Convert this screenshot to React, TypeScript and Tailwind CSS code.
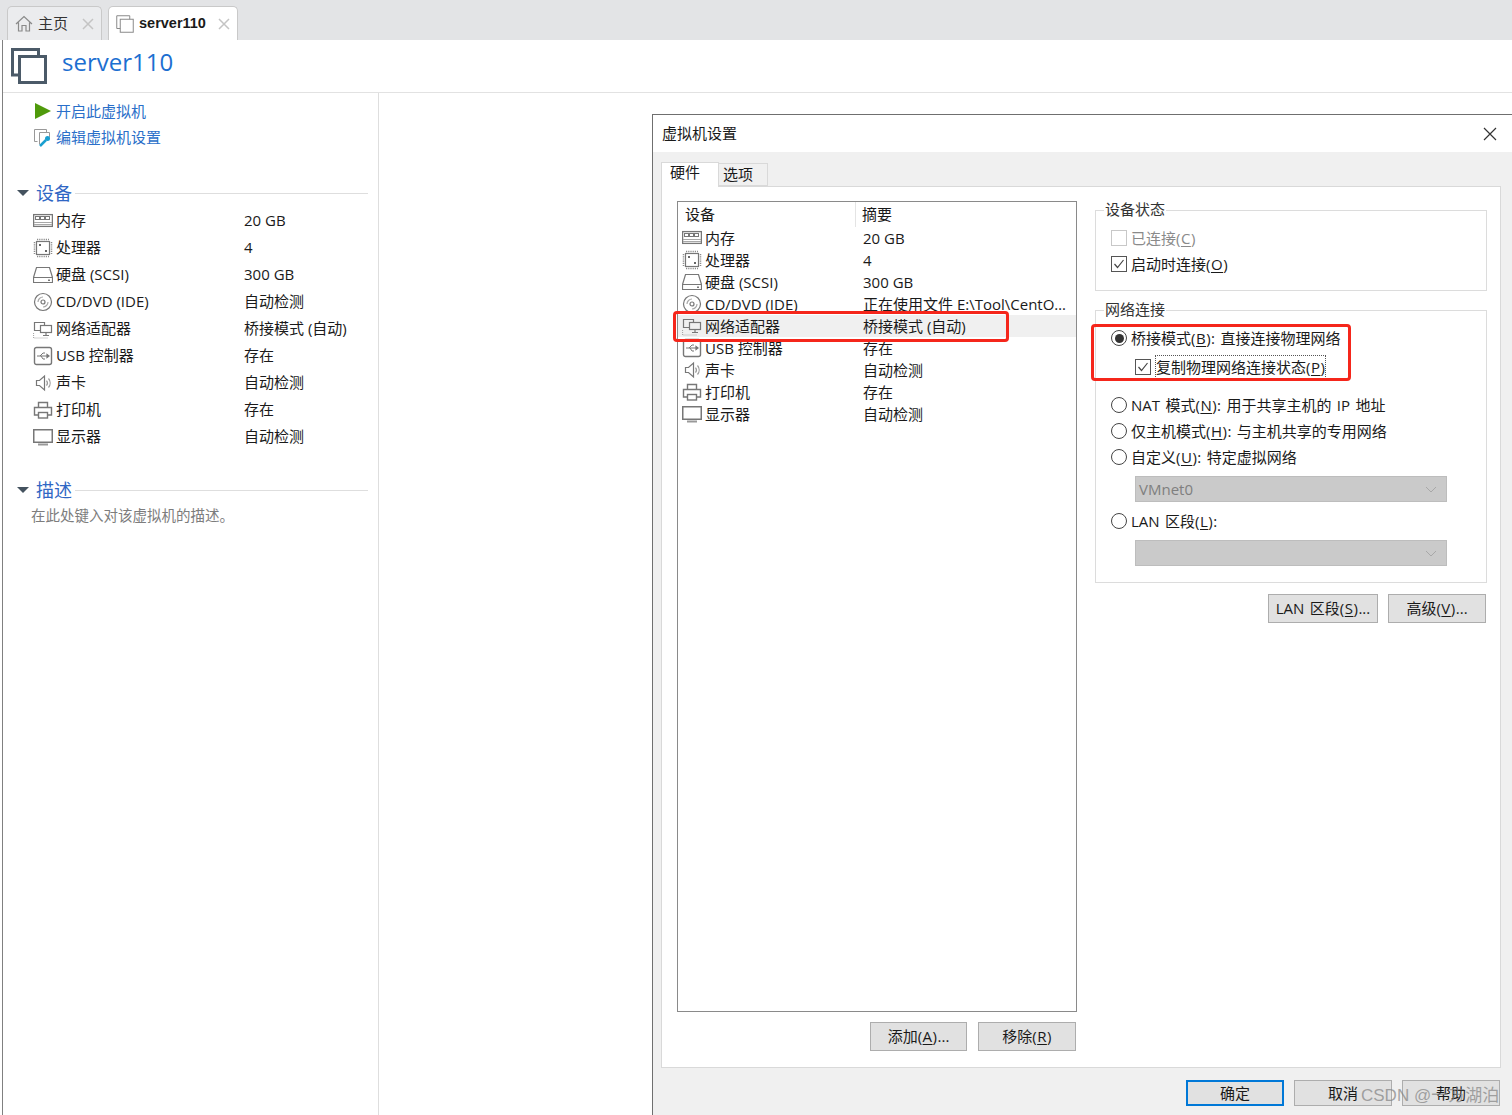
import React from 'react';

const FONT = "font-['Open_Sans','Noto_Sans_CJK_SC',sans-serif]";

const stroke = { fill: 'none', stroke: '#777', strokeWidth: 1.2 };

const MemoryIcon = () => (
  <svg width="20" height="20" viewBox="0 0 20 20" {...stroke}>
    <rect x="0.6" y="3.6" width="18.8" height="11.8" strokeWidth="1.3" />
    <rect x="2.5" y="5.5" width="4" height="3" strokeWidth="1" />
    <rect x="7.5" y="5.5" width="4" height="3" strokeWidth="1" />
    <rect x="12.5" y="5.5" width="4" height="3" strokeWidth="1" />
    <path d="M1 11.5h18M1 13.5h18" stroke="#a8a8a8" strokeWidth="1" />
  </svg>
);

const CpuIcon = () => (
  <svg width="20" height="20" viewBox="0 0 20 20" {...stroke}>
    <rect x="3.5" y="3.5" width="13" height="13" />
    <path d="M4 1.5h12M4 18.5h12M1.5 4v12M18.5 4v12" strokeDasharray="1.2 1" strokeWidth="1.5" stroke="#8c8c8c" />
    <rect x="6" y="6" width="2" height="2" fill="#666" stroke="none" />
    <rect x="12" y="12" width="2" height="2" fill="#666" stroke="none" />
  </svg>
);

const DiskIcon = () => (
  <svg width="20" height="20" viewBox="0 0 20 20" {...stroke}>
    <path d="M3.5 2.5h13l3 10v5h-19v-5zM0.5 12.5h19" />
    <rect x="15" y="14.5" width="2" height="1.5" fill="#777" stroke="none" />
  </svg>
);

const CdIcon = () => (
  <svg width="20" height="20" viewBox="0 0 20 20" {...stroke}>
    <circle cx="10" cy="10" r="8.5" />
    <circle cx="10" cy="10" r="2" />
    <path d="M5 10a5 5 0 0 1 5-5M15 10a5 5 0 0 1-5 5" stroke="#a8a8a8" />
  </svg>
);

const NetworkIcon = () => (
  <svg width="20" height="20" viewBox="0 0 20 20" {...stroke}>
    <path d="M7 11.5H1.5v-8h10v3" />
    <rect x="7.5" y="6.5" width="11" height="7" />
    <path d="M13 13.5v3M10 16.5h6" />
    <path d="M0.5 14v5h14" stroke="#a8a8a8" strokeDasharray="1 1" />
  </svg>
);

const UsbIcon = () => (
  <svg width="20" height="20" viewBox="0 0 20 20" {...stroke}>
    <rect x="1.5" y="1.5" width="17" height="17" rx="2" strokeWidth="1.4" />
    <path d="M4 10h12M7 10l3-3h2M8 10l2 3h2" strokeWidth="1" />
    <path d="M16 10l-2-1.5v3z" fill="#777" />
  </svg>
);

const SoundIcon = () => (
  <svg width="20" height="20" viewBox="0 0 20 20" {...stroke}>
    <path d="M3.5 7.5h3l5-4.5v14l-5-4.5h-3z" />
    <path d="M13.5 7.5a4 4 0 0 1 0 5M15.5 5.5a7 7 0 0 1 0 9" stroke="#999" />
  </svg>
);

const PrinterIcon = () => (
  <svg width="20" height="20" viewBox="0 0 20 20" {...stroke} strokeWidth="1.4">
    <path d="M5.5 7V2.5h9V7" />
    <path d="M5 15H1.5V7.5h17V15H15" />
    <rect x="5.5" y="12.5" width="9" height="5.5" />
  </svg>
);

const MonitorIcon = () => (
  <svg width="20" height="20" viewBox="0 0 20 20" {...stroke}>
    <rect x="0.75" y="2.75" width="18.5" height="12.5" strokeWidth="1.5" />
    <path d="M5 17.5h10" strokeWidth="2" stroke="#999" />
  </svg>
);

const VmIcon = ({ size, sw, color }: { size: number; sw: number; color: string }) => (
  <svg width={size} height={size} viewBox="0 0 36 36" fill="none" stroke={color} strokeWidth={sw}>
    <path d="M8.5 27H1.5V1.5h26v7" />
    <rect x="8.5" y="8.5" width="26" height="26" />
  </svg>
);

const devices = [
  { icon: MemoryIcon, name: '内存', value: '20 GB', summary: '20 GB' },
  { icon: CpuIcon, name: '处理器', value: '4', summary: '4' },
  { icon: DiskIcon, name: '硬盘 (SCSI)', value: '300 GB', summary: '300 GB' },
  { icon: CdIcon, name: 'CD/DVD (IDE)', value: '自动检测', summary: '正在使用文件 E:\\Tool\\CentO…' },
  { icon: NetworkIcon, name: '网络适配器', value: '桥接模式 (自动)', summary: '桥接模式 (自动)' },
  { icon: UsbIcon, name: 'USB 控制器', value: '存在', summary: '存在' },
  { icon: SoundIcon, name: '声卡', value: '自动检测', summary: '自动检测' },
  { icon: PrinterIcon, name: '打印机', value: '存在', summary: '存在' },
  { icon: MonitorIcon, name: '显示器', value: '自动检测', summary: '自动检测' },
];

const Caret = () => <span className="h-0 w-0 border-x-[6px] border-t-[6px] border-x-transparent border-t-[#44525f]" />;

const SectionHead = ({ title }: { title: string }) => (
  <div className="flex h-6 items-center pl-[14px] pr-[10px]">
    <Caret />
    <span className="ml-[7px] text-[18px] leading-6 text-[#2f66c4]">{title}</span>
    <span className="ml-[3px] h-px flex-1 bg-[#dedede]" />
  </div>
);

const Sidebar = () => (
  <aside className="flex w-[376px] shrink-0 flex-col border-r border-[#dedede] pt-[5px]">
    <div className="flex h-[26px] items-center pl-[29px] text-[15px] text-[#2a6fc9]">
      <svg width="20" height="20" viewBox="0 0 20 20" className="mr-[4px]">
        <path d="M3 2l16 8-16 8z" fill="#4f9a0b" />
      </svg>
      开启此虚拟机
    </div>
    <div className="flex h-[26px] items-center pl-[29px] text-[15px] text-[#2a6fc9]">
      <svg width="20" height="20" viewBox="0 0 20 20" className="mr-[4px]">
        <path d="M5.5 14.5H2.5V2.5h12v3" fill="none" stroke="#999" />
        <path d="M7.5 17.5V5.5h10v5" fill="none" stroke="#999" />
        <path d="M8 19l6-6" stroke="#1a9fd0" strokeWidth="2.5" />
        <circle cx="15.5" cy="11.5" r="2.5" fill="#1a9fd0" />
      </svg>
      编辑虚拟机设置
    </div>
    <div className="mt-[31px]">
      <SectionHead title="设备" />
    </div>
    <div className="mt-[2px] flex flex-col">
      {devices.map((d) => (
        <div key={d.name} className="flex h-[27px] items-center pl-[29px] text-[15px] text-[#1a1a1a]">
          <span className="mr-[2px] flex w-[22px] justify-center"><d.icon /></span>
          <span className="w-[188px]">{d.name}</span>
          <span>{d.value}</span>
        </div>
      ))}
    </div>
    <div className="mt-[28px]">
      <SectionHead title="描述" />
    </div>
    <p className="mt-[2px] pl-[28px] text-[14.5px] leading-6 text-[#7d7d7d]">在此处键入对该虚拟机的描述。</p>
  </aside>
);

const Underlined = ({ before, k, after }: { before: string; k: string; after?: string }) => (
  <span className="whitespace-pre [word-spacing:1.5px]">
    {before}
    <span className="tracking-[0.5px]">(<span className="underline underline-offset-2">{k}</span>)</span>
    {after}
  </span>
);

const Check = ({ disabled }: { disabled?: boolean }) => (
  <span className={`flex h-4 w-4 shrink-0 items-center justify-center border ${disabled ? 'border-[#c8c8c8]' : 'border-[#555]'} bg-white`}>
    {!disabled && (
      <svg width="12" height="12" viewBox="0 0 12 12">
        <path d="M1.5 6l3 3.5 6-7.5" fill="none" stroke="#444" strokeWidth="1.2" />
      </svg>
    )}
  </span>
);

const Radio = ({ on }: { on?: boolean }) => (
  <span className="flex h-4 w-4 shrink-0 items-center justify-center rounded-full border border-[#444] bg-white">
    {on && <span className="h-[9px] w-[9px] rounded-full bg-[#333]" />}
  </span>
);

const Row = ({ className, children }: { className: string; children: React.ReactNode }) => (
  <div className={`flex items-center gap-[4px] text-[15px] ${className}`}>{children}</div>
);

const DisabledSelect = ({ value, className }: { value?: string; className: string }) => (
  <div className={`ml-[24px] flex h-[26px] w-[312px] items-center justify-between border border-[#bdbdbd] bg-[#cacaca] pl-[3px] pr-[9px] text-[15px] text-[#7f7f7f] ${className}`}>
    <span>{value}</span>
    <svg width="12" height="7" viewBox="0 0 12 7">
      <path d="M1 1l5 5 5-5" fill="none" stroke="#a8a8a8" />
    </svg>
  </div>
);

const Btn = ({ className, children }: { className: string; children: React.ReactNode }) => (
  <div className={`flex items-center justify-center border bg-[#e1e1e1] text-[15px] text-[#1a1a1a] ${className}`}>{children}</div>
);

const Group = ({ title, className, children }: { title: string; className: string; children: React.ReactNode }) => (
  <div className={`border border-[#dcdcdc] ${className}`}>
    <span className="ml-[8px] -mt-[13px] block h-[24px] w-fit bg-white px-[1px] text-[15px] leading-[22px] text-[#333]">{title}</span>
    <div className="pl-[15px]">{children}</div>
  </div>
);

const Dialog = () => (
  <div className="ml-[273px] mt-[21px] flex h-[1001px] w-[860px] flex-col border-l border-t border-[#6f6f6f] bg-[#f0f0f0]">
    <div className="flex h-[37px] shrink-0 items-center justify-between bg-white pl-[9px] pr-[15px] text-[15px] text-[#1a1a1a]">
      虚拟机设置
      <svg width="14" height="14" viewBox="0 0 14 14">
        <path d="M1 1l12 12M13 1L1 13" stroke="#333" strokeWidth="1.2" />
      </svg>
    </div>
    <div className="flex flex-1 flex-col pl-[8px] pr-[11px] pt-[9px]">
      <div className="flex h-[25px] items-end">
        <div className="z-10 -mb-px h-[25px] w-[58px] border border-b-0 border-[#d9d9d9] bg-white pl-[8px] text-[15px] leading-[18px] text-[#1a1a1a]">硬件</div>
        <div className="h-[23px] w-[49px] border border-l-0 border-[#d9d9d9] bg-[#f0f0f0] pl-[4px] text-[15px] leading-[21px] text-[#1a1a1a]">选项</div>
      </div>
      <div className="flex h-[882px] border border-[#d9d9d9] bg-white pl-[15px] pr-[13px] pt-[14px]">
        <div className="flex w-[400px] shrink-0 flex-col">
          <div className="flex h-[811px] flex-col border border-[#8a8a8a] bg-white">
            <div className="flex h-[25px] items-center text-[15px] text-[#1a1a1a]">
              <span className="h-full w-[178px] border-r border-[#e4e4e4] pl-[7px] leading-[25px]">设备</span>
              <span className="pl-[6px]">摘要</span>
            </div>
            {devices.map((d) => (
              <div key={d.name} className={`flex h-[22px] items-center text-[15px] text-[#1a1a1a] ${d.name === '网络适配器' ? 'bg-[#f0f0f0]' : ''}`}>
                <span className="ml-[4px] mr-[3px] flex w-[20px] justify-center"><d.icon /></span>
                <span className="w-[158px]">{d.name}</span>
                <span className="whitespace-nowrap">{d.summary}</span>
              </div>
            ))}
          </div>
          <div className="mt-[10px] flex justify-end gap-[11px] pr-px">
            <Btn className="h-[29px] w-[97px] border-[#adadad]"><Underlined before="添加" k="A" after="..." /></Btn>
            <Btn className="h-[29px] w-[98px] border-[#adadad]"><Underlined before="移除" k="R" /></Btn>
          </div>
        </div>
        <div className="ml-[18px] flex flex-1 flex-col pt-[9px]">
          <Group title="设备状态" className="h-[81px]">
            <Row className="mt-[3px] h-[26px] text-[#8a8a8a]"><Check disabled /><Underlined before="已连接" k="C" /></Row>
            <Row className="h-[26px] text-[#1a1a1a]"><Check /><Underlined before="启动时连接" k="O" /></Row>
          </Group>
          <Group title="网络连接" className="mt-[19px] h-[273px] text-[#1a1a1a]">
            <Row className="mt-[4px] h-[24px]"><Radio on /><Underlined before="桥接模式" k="B" after=": 直接连接物理网络" /></Row>
            <Row className="ml-[24px] mt-[5px] h-[24px]"><Check /><span className="border border-dotted border-[#555]"><Underlined before="复制物理网络连接状态" k="P" /></span></Row>
            <Row className="mt-[14px] h-[24px]"><Radio /><Underlined before="NAT 模式" k="N" after=": 用于共享主机的 IP 地址" /></Row>
            <Row className="mt-[2px] h-[24px]"><Radio /><Underlined before="仅主机模式" k="H" after=": 与主机共享的专用网络" /></Row>
            <Row className="mt-[2px] h-[24px]"><Radio /><Underlined before="自定义" k="U" after=": 特定虚拟网络" /></Row>
            <DisabledSelect value="VMnet0" className="mt-[7px]" />
            <Row className="mt-[7px] h-[24px]"><Radio /><Underlined before="LAN 区段" k="L" after=":" /></Row>
            <DisabledSelect className="mt-[7px]" />
          </Group>
          <div className="mt-[11px] flex justify-end gap-[10px] pr-px">
            <Btn className="h-[29px] w-[110px] border-[#adadad]"><Underlined before="LAN 区段" k="S" after="..." /></Btn>
            <Btn className="h-[29px] w-[98px] border-[#adadad]"><Underlined before="高级" k="V" after="..." /></Btn>
          </div>
        </div>
      </div>
      <div className="mt-[12px] flex justify-end gap-[10px] pr-px">
        <Btn className="h-[26px] w-[98px] border-2 border-[#0078d7]">确定</Btn>
        <Btn className="h-[26px] w-[98px] border-[#adadad]">取消</Btn>
        <Btn className="h-[26px] w-[98px] border-[#adadad]">帮助</Btn>
      </div>
    </div>
  </div>
);

export default function App() {
  return (
    <div className={`relative flex h-[1115px] w-[1512px] flex-col overflow-hidden bg-white ${FONT}`}>
      <div className="flex h-10 shrink-0 items-end gap-[6px] bg-[#e3e4e6] pl-[7px]">
        <div className="flex h-[34px] w-[95px] items-center rounded-t-[5px] border border-b-0 border-[#c9c9c9] bg-[#ebecee] pl-[7px] text-[15px] text-[#333]">
          <svg width="18" height="18" viewBox="0 0 18 18" fill="none" stroke="#8a8a8a" strokeWidth="1.2">
            <path d="M1 9l8-7.5L17 9M3.5 7.5v8.5h3.5v-5.5h4V16h3.5V7.5" />
          </svg>
          <span className="ml-[5px]">主页</span>
          <svg width="12" height="12" viewBox="0 0 12 12" className="ml-[14px]">
            <path d="M1 1l10 10M11 1L1 11" stroke="#c4c4c4" strokeWidth="1.5" />
          </svg>
        </div>
        <div className="flex h-[34px] w-[130px] items-center rounded-t-[5px] border border-b-0 border-[#c9c9c9] bg-white pl-[7px] text-[14.5px] font-bold text-[#1a1a1a]">
          <VmIcon size={18} sw={2} color="#8a8a8a" />
          <span className="ml-[5px] font-['Liberation_Sans',sans-serif]">server110</span>
          <svg width="12" height="12" viewBox="0 0 12 12" className="ml-[12px]">
            <path d="M1 1l10 10M11 1L1 11" stroke="#c4c4c4" strokeWidth="1.5" />
          </svg>
        </div>
      </div>
      <div className="ml-[2px] flex min-h-0 flex-1 flex-col border-l border-[#808080]">
        <div className="flex h-[53px] shrink-0 items-center border-b border-[#e2e2e2] pl-[8px]">
          <VmIcon size={36} sw={3} color="#4b5a68" />
          <span className="-mt-[8px] ml-[15px] text-[24px] text-[#1c6fd1]">server110</span>
        </div>
        <div className="flex min-h-0 flex-1">
          <Sidebar />
          <Dialog />
        </div>
      </div>

      {/* annotations drawn over the screenshot */}
      <div className="absolute left-[673px] top-[311px] h-[31px] w-[336px] rounded-[4px] border-[3px] border-[#f5261b]" />
      <div className="absolute left-[1091px] top-[324px] h-[57px] w-[260px] rounded-[4px] border-[3px] border-[#f5261b]" />
      <div className="absolute left-[1361px] top-[1084px] whitespace-nowrap font-['Liberation_Sans','Noto_Sans_CJK_SC',sans-serif] text-[17px] leading-6 text-[#808080]/70">CSDN @一方湖泊</div>
    </div>
  );
}
